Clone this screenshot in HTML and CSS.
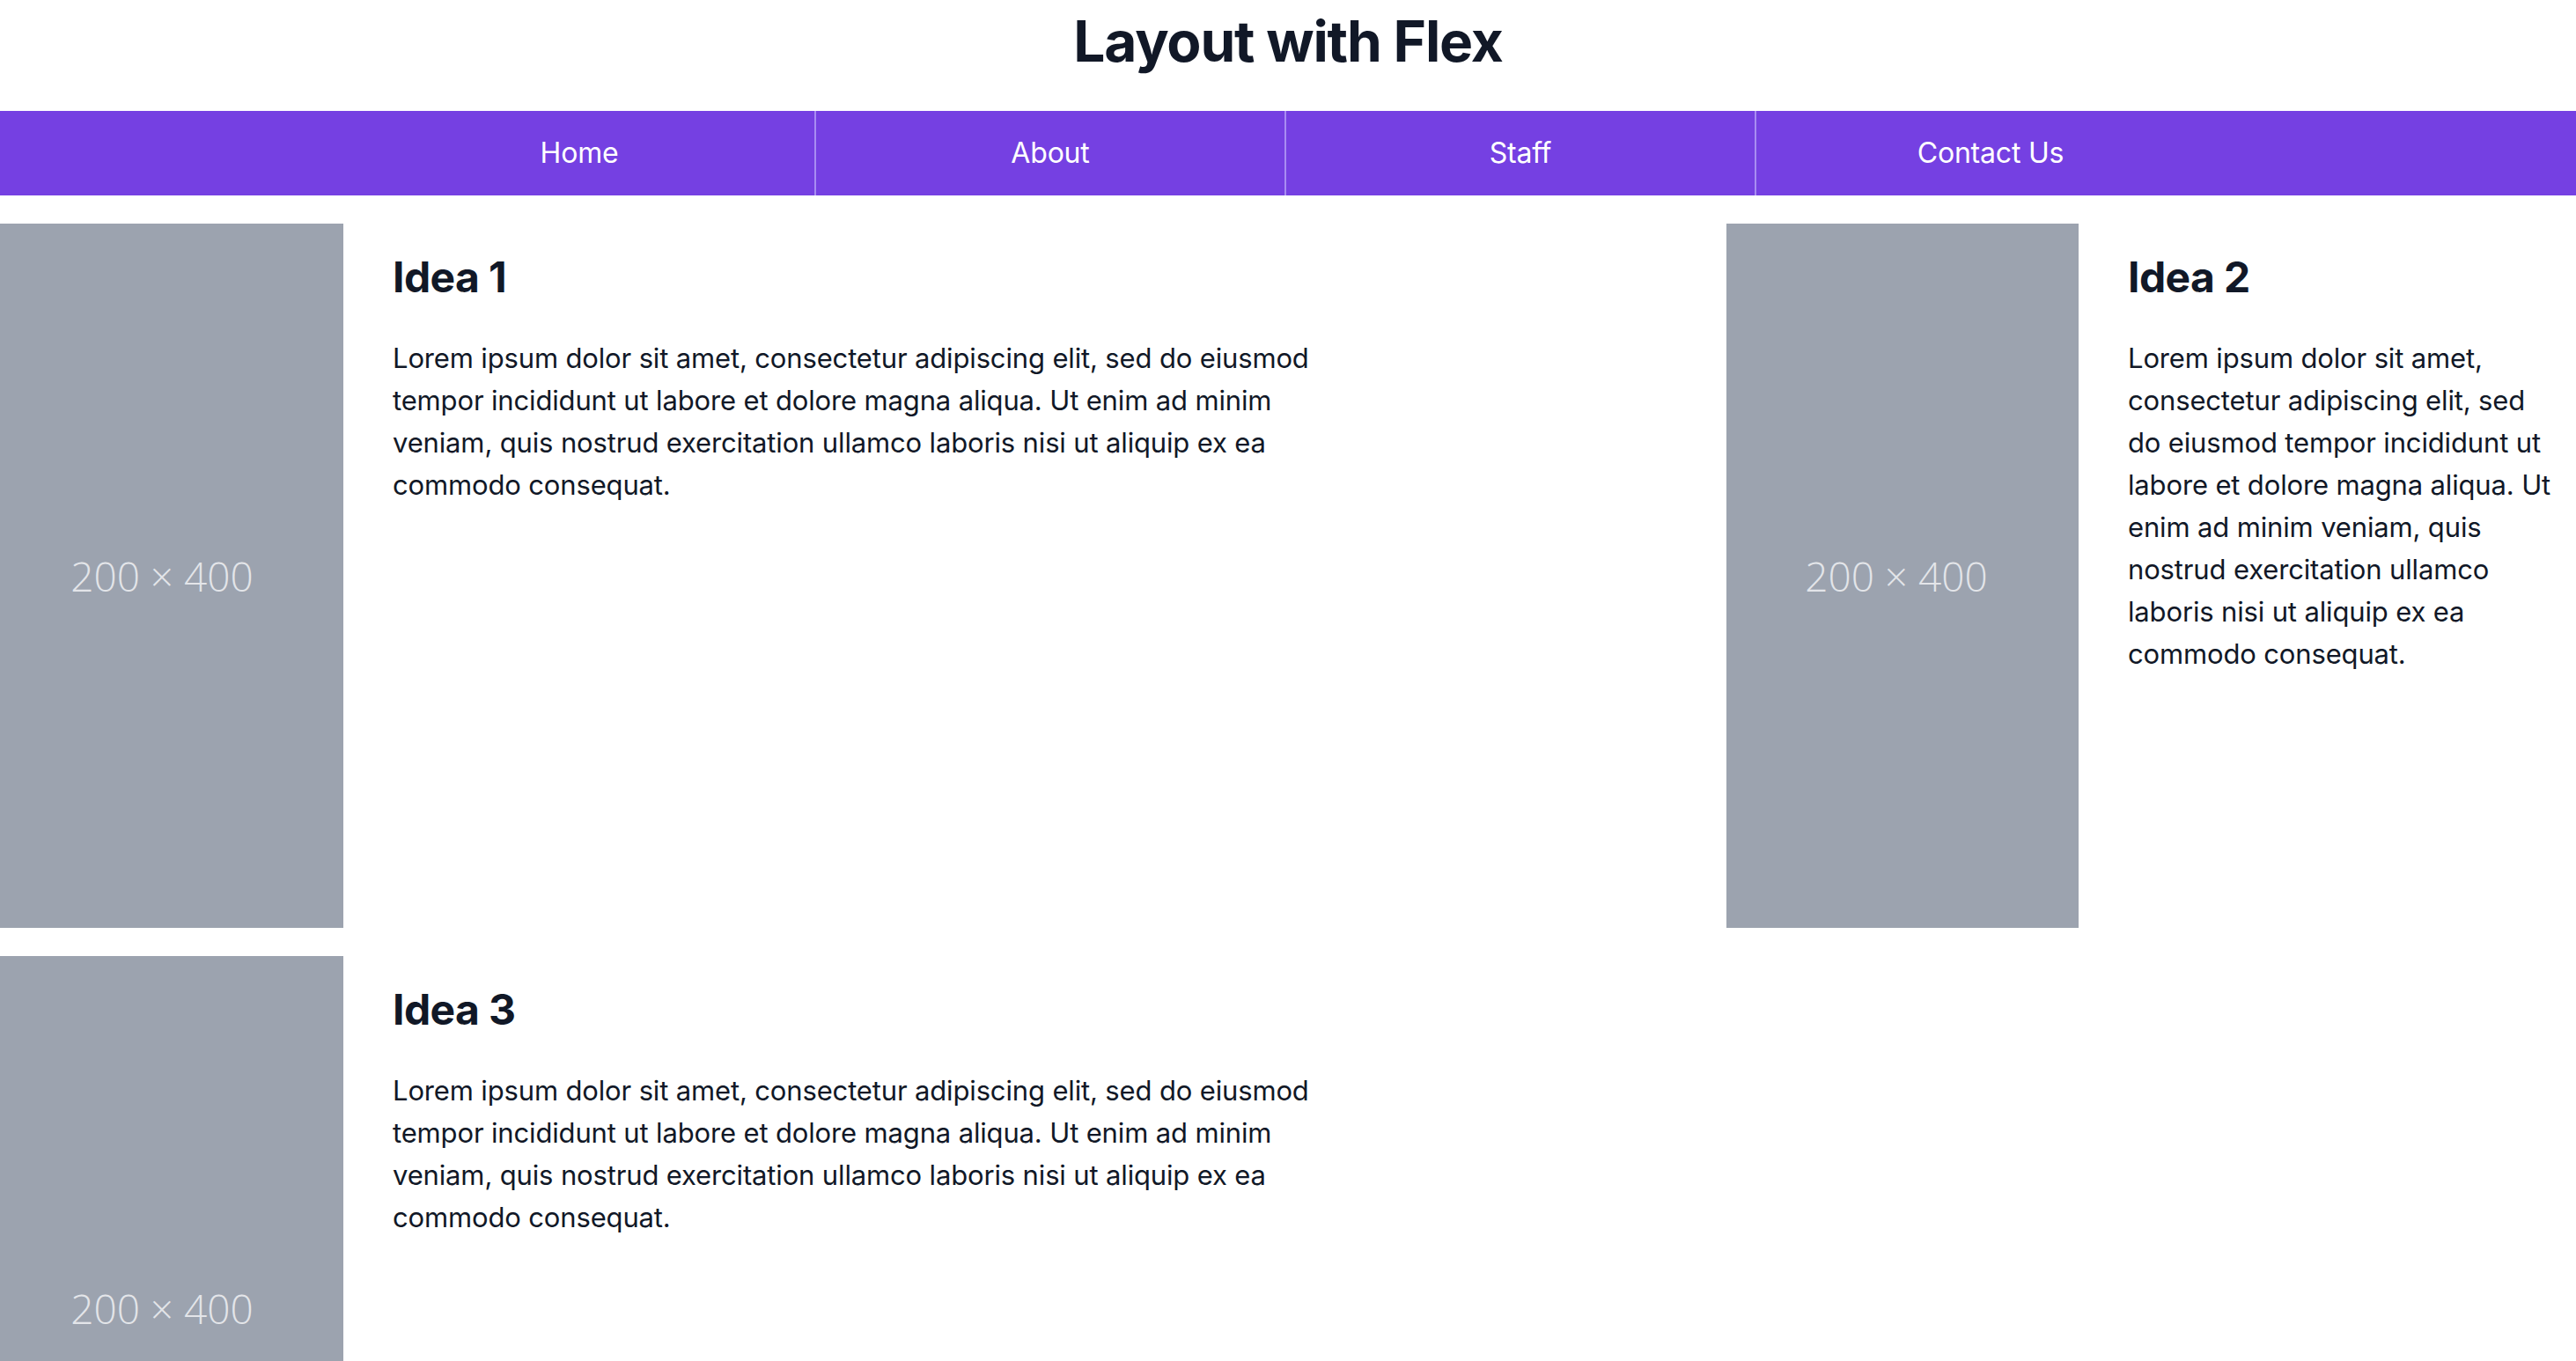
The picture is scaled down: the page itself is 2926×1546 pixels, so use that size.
FILE: index.html
```html
<!DOCTYPE html>
<html lang="en">
<head>
<meta charset="utf-8">
<title>Layout with Flex</title>
<link rel="stylesheet" href="styles.css">
</head>
<body>
<header class="site-header">
  <h1 class="title">Layout with Flex</h1>
</header>
<nav class="nav">
  <ul class="nav-list">
    <li class="nav-item"><a class="nav-link" href="#">Home</a></li>
    <li class="nav-item"><a class="nav-link" href="#">About</a></li>
    <li class="nav-item"><a class="nav-link" href="#">Staff</a></li>
    <li class="nav-item"><a class="nav-link" href="#">Contact Us</a></li>
  </ul>
</nav>
<main class="main">
  <div class="row">
    <article class="card card-main">
      <div class="ph ph-narrow"><span class="ph-text">200 × 400</span></div>
      <div class="card-body body-wide">
        <h2 class="card-title">Idea 1</h2>
        <p class="card-text">Lorem ipsum dolor sit amet, consectetur adipiscing elit, sed do eiusmod tempor incididunt ut labore et dolore magna aliqua. Ut enim ad minim veniam, quis nostrud exercitation ullamco laboris nisi ut aliquip ex ea commodo consequat.</p>
      </div>
    </article>
    <article class="card card-side">
      <div class="ph"><span class="ph-text">200 × 400</span></div>
      <div class="card-body body-narrow">
        <h2 class="card-title">Idea 2</h2>
        <p class="card-text">Lorem ipsum dolor sit amet, consectetur adipiscing elit, sed do eiusmod tempor incididunt ut labore et dolore magna aliqua. Ut enim ad minim veniam, quis nostrud exercitation ullamco laboris nisi ut aliquip ex ea commodo consequat.</p>
      </div>
    </article>
  </div>
  <div class="row">
    <article class="card card-main">
      <div class="ph ph-narrow"><span class="ph-text">200 × 400</span></div>
      <div class="card-body body-wide">
        <h2 class="card-title">Idea 3</h2>
        <p class="card-text">Lorem ipsum dolor sit amet, consectetur adipiscing elit, sed do eiusmod tempor incididunt ut labore et dolore magna aliqua. Ut enim ad minim veniam, quis nostrud exercitation ullamco laboris nisi ut aliquip ex ea commodo consequat.</p>
      </div>
    </article>
  </div>
</main>
</body>
</html>
```

FILE: styles.css
```css
html, body {
  margin: 0;
  padding: 0;
  height: 100%;
  overflow: hidden;
  background: #ffffff;
}

body {
  font-family: "Inter", "Noto Sans", "Liberation Sans", sans-serif;
  color: #111827;
}

.site-header {
  padding: 15px 0 47px;
}

.title {
  margin: 0;
  text-align: center;
  font-size: 64px;
  line-height: 64px;
  font-weight: 700;
  letter-spacing: -1.2px;
  color: #111827;
}

.nav {
  background: #7540e2;
  height: 96px;
}

.nav-list {
  list-style: none;
  margin: 0;
  padding: 0 8px 0 0;
  display: flex;
  justify-content: center;
  height: 100%;
}

.nav-item {
  width: 534px;
  display: flex;
  align-items: center;
  justify-content: center;
  box-sizing: border-box;
}

.nav-item + .nav-item {
  border-left: 2px solid #a88cf2;
}

.nav-link {
  color: #ffffff;
  text-decoration: none;
  font-size: 32px;
  line-height: 48px;
  letter-spacing: -0.2px;
}

.main {
  padding-top: 32px;
  display: flex;
  flex-direction: column;
  gap: 32px;
}

.row {
  display: flex;
  justify-content: space-between;
  align-items: flex-start;
}

.card {
  display: flex;
  align-items: flex-start;
}

.card-side {
  width: 965px;
}

.ph {
  flex: none;
  width: 400px;
  height: 800px;
  background: #9ca3af;
  display: flex;
  align-items: center;
  justify-content: center;
  box-sizing: border-box;
  padding-right: 14px;
}

.ph-narrow {
  width: 390px;
  padding-right: 22px;
}

.ph-text {
  font-family: "Open Sans", "Noto Sans", sans-serif;
  font-weight: 300;
  font-size: 46px;
  color: #e3e5e9;
  white-space: nowrap;
}

.card-body {
  margin-left: 56px;
}

.body-wide {
  width: 1090px;
}

.body-narrow {
  width: 494px;
}

.card-title {
  margin: 32px 0 0;
  font-size: 48px;
  line-height: 58px;
  font-weight: 700;
  letter-spacing: -0.6px;
  color: #111827;
}

.card-text {
  margin: 39px 0 0;
  font-size: 31px;
  line-height: 48px;
  letter-spacing: -0.15px;
  color: #111827;
}
```
